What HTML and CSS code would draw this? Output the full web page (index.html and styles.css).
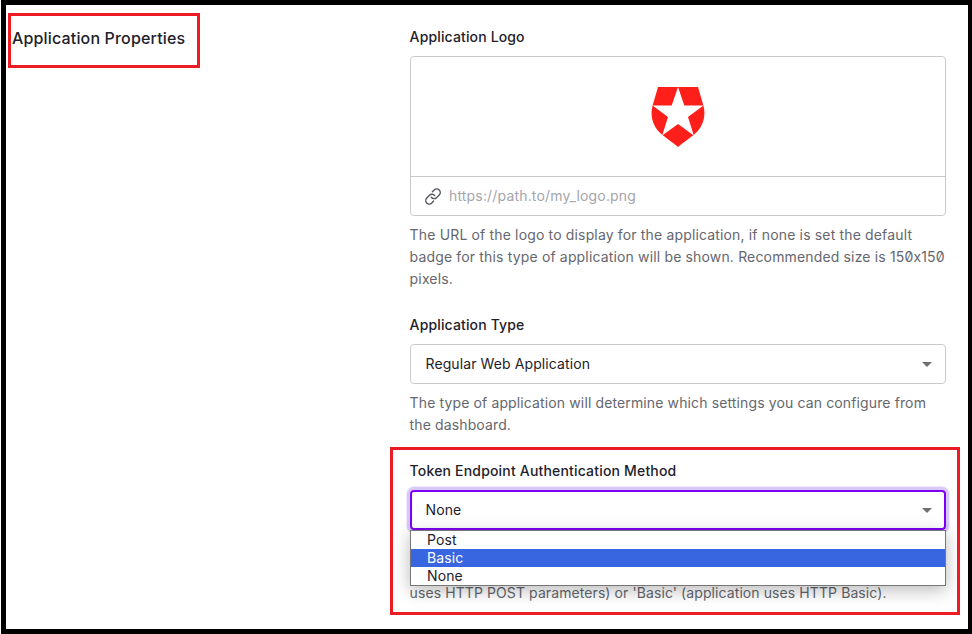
FILE: index.html
```html
<!DOCTYPE html>
<html lang="en">
<head>
<meta charset="utf-8">
<title>Application Properties</title>
<link rel="stylesheet" href="styles.css">
</head>
<body>
<main class="frame">
  <h2 class="section-title"><span>Application Properties</span></h2>
  <div class="form">
    <section class="field logo-field">
      <label class="label">Application Logo</label>
      <div class="logo-box">
        <div class="preview">
          <svg width="54" height="61" viewBox="0 0 54 61">
            <path fill="#ff1f1a" d="M7 0H47L52.4 18.5C55.3 29 52 40 43.5 47.3C38 52 32 55.500 27 60C22 55.500 16 52 10.500 47.300C2 40 -1.300 29 1.600 18.500Z"/>
            <path fill="#fff" d="M27 0L33.3 18.500H52.400L37 30L42.800 48.400L27 37L11.200 48.400L17 30L1.600 18.500H20.700Z"/>
          </svg>
        </div>
        <div class="url">
          <svg class="link" width="16" height="17" viewBox="0 0 16 17" fill="none" stroke="#54565e" stroke-width="1.4" stroke-linecap="round">
            <path d="M6.300 9.300A3.500 3.500 0 0 0 11.500 9.700L14.200 7A3.500 3.500 0 0 0 9.200 2L7.400 3.800"/>
            <path d="M9.700 7.600A3.500 3.500 0 0 0 4.500 7.200L1.800 9.900A3.500 3.500 0 0 0 6.800 14.900L8.600 13.100"/>
          </svg>
          <span class="placeholder">https://path.to/my_logo.png</span>
        </div>
      </div>
      <p class="help">The URL of the logo to display for the application, if none is set the default<br>badge for this type of application will be shown. Recommended size is 150x150<br>pixels.</p>
    </section>
    <section class="field type-field">
      <label class="label">Application Type</label>
      <div class="select"><span>Regular Web Application</span><svg width="10" height="5" viewBox="0 0 10 5"><path fill="#6f6f6f" d="M0 0H10L5 5Z"/></svg></div>
      <p class="help">The type of application will determine which settings you can configure from<br>the dashboard.</p>
    </section>
    <section class="field highlighted">
      <label class="label">Token Endpoint Authentication Method</label>
      <div class="select focused"><span>None</span><svg width="10" height="5" viewBox="0 0 10 5"><path fill="#6f6f6f" d="M0 0H10L5 5Z"/></svg>
        <ul class="menu">
          <li>Post</li>
          <li class="active">Basic</li>
          <li>None</li>
        </ul>
      </div>
      <p class="help">uses HTTP POST parameters) or 'Basic' (application uses HTTP Basic).</p>
    </section>
  </div>
</main>
</body>
</html>
```
FILE: styles.css
```css
* { box-sizing: border-box; }
body {
  margin: 0;
  background: #fff;
  font-family: Inter, "Liberation Sans", sans-serif;
  font-size: 14px;
  line-height: 22px;
  color: #1e212a;
  font-feature-settings: "zero";
}
.frame {
  display: flex;
  align-items: flex-start;
  width: 971px;
  height: 634px;
  margin-left: 1px;
  border: 5px solid #000;
  border-right-width: 4px;
  overflow: hidden;
}
.section-title {
  flex: none;
  width: 192px;
  height: 55px;
  margin: 8px 190px 0 2px;
  padding: 11px 0 0 1px;
  border: 3px solid #ed1c24;
  font-size: 16px;
  line-height: 22px;
  font-weight: 500;
  letter-spacing: 0.16px;
  white-space: nowrap;
}
.form {
  width: 570px;
  flex: none;
  padding-top: 21px;
}
.field { padding: 0 14px 0 20px; margin-bottom: 24px; }
.field.highlighted {
  height: 168px;
  margin-top: -13px;
  padding: 10px 11px 0 17px;
  border: 3px solid #ed1c24;
}
.label { display: block; margin: 0 0 8px -0.4px; font-weight: 500; letter-spacing: 0.14px; }
.highlighted .label { letter-spacing: 0.18px; }
.logo-box { border: 1px solid #c9cace; border-radius: 4px; height: 160px; }
.preview {
  display: flex;
  justify-content: center;
  height: 120px;
  padding-top: 30px;
  border-bottom: 1px solid #c9cace;
}
.url { display: flex; align-items: center; height: 38px; padding-left: 13.5px; }
.placeholder { margin-left: 8.5px; color: #a5a5aa; letter-spacing: 0.17px; }
.help { margin: 8px 0 0 -0.4px; color: #65676e; white-space: nowrap; }
.logo-field .help { letter-spacing: 0.155px; }
.type-field .help { letter-spacing: 0.125px; }
.highlighted .help { margin-top: 52px; letter-spacing: 0.09px; }
.select {
  position: relative;
  display: flex;
  justify-content: space-between;
  align-items: center;
  height: 40px;
  padding: 0 13px 0 14.5px;
  border: 1px solid #c9cace;
  border-radius: 4px;
  letter-spacing: 0.1px;
}
.focused {
  padding: 0 12px 0 13.5px;
  border: 2px solid #7d00f4;
  box-shadow: 0 0 0 3px #d9c8fa, 0 0 0 4px #f0e9fd;
}
.menu {
  position: absolute;
  top: 38px;
  left: -2px;
  width: 536px;
  height: 56px;
  margin: 0;
  padding: 0;
  list-style: none;
  background: #fff;
  border: 1px solid #767676;
  box-shadow: 0 4px 16px rgba(0, 0, 0, 0.28);
  clip-path: inset(-24px -11px -26px -17px);
}
.menu li { height: 18px; padding-left: 16px; line-height: 18px; }
.menu .active { background: #3766e0; color: #fff; }
```
